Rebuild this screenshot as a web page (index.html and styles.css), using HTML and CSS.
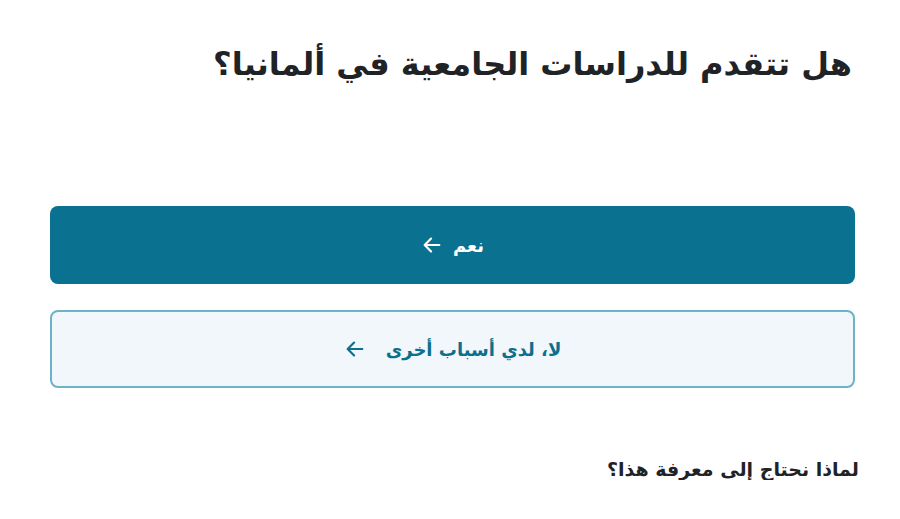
FILE: index.html
```html
<!doctype html>
<html lang="ar" dir="rtl">
<head>
  <meta charset="UTF-8">
  <meta name="viewport" content="width=device-width, initial-scale=1.0">
  <title>الدراسة في ألمانيا</title>
  <link rel="stylesheet" href="styles.css">
</head>
<body>
  <div class="container">
    <h1 class="question">هل تتقدم للدراسات الجامعية في ألمانيا؟</h1>

    <div class="options">
      <button class="option option-primary">
        <span>نعم</span>
        <svg class="arrow" viewBox="0 0 24 24" width="22" height="22"><path d="M20 12H5M11 5l-7 7 7 7" fill="none" stroke="currentColor" stroke-width="2.4" stroke-linecap="round" stroke-linejoin="round"/></svg>
      </button>
      <button class="option option-secondary">
        <span>لا، لدي أسباب أخرى</span>
        <svg class="arrow" viewBox="0 0 24 24" width="22" height="22"><path d="M20 12H5M11 5l-7 7 7 7" fill="none" stroke="currentColor" stroke-width="2.4" stroke-linecap="round" stroke-linejoin="round"/></svg>
      </button>
    </div>

    <p class="why">لماذا نحتاج إلى معرفة هذا؟</p>
  </div>
</body>
</html>
```

FILE: styles.css
```css
body {
  font-family: "DejaVu Sans", Arial, sans-serif;
  margin: 0;
  padding: 0;
  background: #fff;
  color: #1f2326;
}

.container {
  padding: 30px 44px 0 50px;
}

.question {
  font-size: 32px;
  font-weight: bold;
  margin: 0 0 0 0;
  padding-right: 4px;
  line-height: 68px;
  height: 176px;
}

.options {
  display: flex;
  flex-direction: column;
  gap: 26px;
  margin-right: 1px;
}

.option {
  display: flex;
  align-items: center;
  justify-content: center;
  gap: 10px;
  height: 78px;
  border-radius: 8px;
  font-family: inherit;
  font-size: 18px;
  font-weight: bold;
  cursor: pointer;
}

.option-primary {
  background: #0b7190;
  color: #fff;
  border: none;
}

.option-secondary {
  background: #f1f7fa;
  color: #0b6f8d;
  border: 2px solid #6eb2c7;
}

.option-secondary .arrow {
  margin-right: 10px;
}

.why {
  font-size: 19px;
  font-weight: bold;
  margin: 70px -3px 0 0;
}
```
